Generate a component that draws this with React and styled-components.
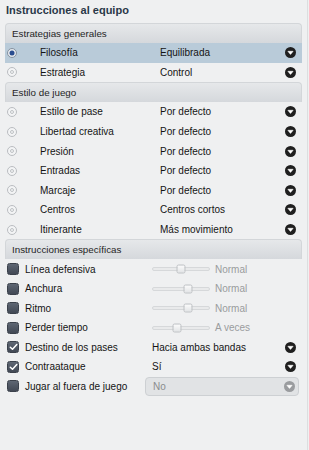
import styled, { createGlobalStyle } from "styled-components";

const GlobalStyle = createGlobalStyle`
  html, body {
    margin: 0;
    padding: 0;
    background: #eff0f1;
  }
  body {
    font-family: "Liberation Sans", Arial, sans-serif;
  }
`;

const Page = styled.div`
  width: 308px;
  height: 450px;
  box-sizing: border-box;
  border-right: 1px solid #dcdedf;
  padding: 0 7px 0 5px;
  background: #eff0f1;
`;

const Title = styled.h1`
  margin: 0 0 3px 1px;
  height: 20px;
  line-height: 20px;
  font-size: 11px;
  font-weight: 700;
  color: #2a3848;
`;

const Section = styled.div`
  width: 297px;
`;

const SectionHeader = styled.div`
  height: 20px;
  box-sizing: border-box;
  line-height: 19px;
  padding-left: 6px;
  font-size: 9.8px;
  color: #1f1f1f;
  border: 1px solid #d3d6d9;
  border-bottom: none;
  border-radius: 4px 4px 0 0;
  background: linear-gradient(#e6e8ea, #d5d8dc);
`;

const Row = styled.div`
  display: flex;
  align-items: center;
  height: ${p => p.$h || 19.6}px;
  font-size: 10px;
  color: #141414;
  background: ${p => (p.$active ? "#b9cbd9" : "transparent")};
`;

const Radio = styled.span`
  position: relative;
  flex: none;
  width: 10px;
  height: 10px;
  margin: 0 23px 0 2px;
  border-radius: 50%;
  box-sizing: border-box;
  border: 1px solid ${p => (p.$on ? "#8592a0" : "#babdc1")};
  background: ${p => (p.$on ? "#e4e8ec" : "#f3f4f5")};
  &::after {
    content: "";
    position: absolute;
    left: 50%;
    top: 50%;
    width: ${p => (p.$on ? 5 : 4)}px;
    height: ${p => (p.$on ? 5 : 4)}px;
    transform: translate(-50%, -50%);
    border-radius: 50%;
    box-sizing: border-box;
    background: ${p => (p.$on ? "#2a4d8f" : "transparent")};
    border: ${p => (p.$on ? "none" : "1px solid #bfc2c5")};
  }
`;

const Check = styled.span`
  display: flex;
  flex: none;
  align-items: center;
  justify-content: center;
  width: 12px;
  height: 12px;
  margin: 0 6px 0 2px;
  box-sizing: border-box;
  border-radius: 2.5px;
  border: 1px solid #3b414b;
  background: linear-gradient(#5e6673, #424955);
`;

const Label = styled.span`
  width: ${p => p.$w}px;
  flex: none;
  white-space: nowrap;
`;

const Value = styled.span`
  flex: 1;
  white-space: nowrap;
  color: ${p => (p.$muted ? "#8a8c8e" : "#141414")};
`;

const ArrowBox = styled.span`
  display: flex;
  width: 11px;
  height: 11px;
  margin-right: ${p => p.$mr ?? 6.5}px;
`;

const Slider = styled.span`
  display: flex;
  align-items: center;
  gap: 5px;
  color: #9a9c9e;
`;

const Track = styled.span`
  position: relative;
  width: 58px;
  height: 4px;
  box-sizing: border-box;
  border-radius: 2px;
  border: 1px solid #d6d8da;
  background: #e9eaeb;
`;

const Thumb = styled.span`
  position: absolute;
  top: 50%;
  width: 9px;
  height: 9px;
  box-sizing: border-box;
  transform: translate(-50%, -50%);
  border-radius: 2px;
  border: 1px solid #bfc2c5;
  background: linear-gradient(#fbfbfb, #e2e4e6);
`;

const Select = styled.span`
  display: flex;
  align-items: center;
  width: 154px;
  height: 19px;
  box-sizing: border-box;
  padding-left: 7px;
  margin-left: -7px;
  border: 1px solid #cdd0d3;
  border-radius: 4px;
  background: #e1e3e5;
`;

function Arrow({ color = "#1f1f1f", mr }) {
  return (
    <ArrowBox $mr={mr}>
      <svg width="11" height="11" viewBox="0 0 11 11">
        <circle cx="5.5" cy="5.5" r="5.5" fill={color} />
        <path d="M2.9 4.3 H8.1 L5.5 7.4 Z" fill="#fff" stroke="#fff" strokeWidth="0.6" strokeLinejoin="round" />
      </svg>
    </ArrowBox>
  );
}

function Tick() {
  return (
    <svg width="9" height="8" viewBox="0 0 9 8">
      <path d="M1.3 4.2 L3.5 6.3 L7.8 1.5" fill="none" stroke="#fff" strokeWidth="1.5" strokeLinecap="round" strokeLinejoin="round" />
    </svg>
  );
}

const general = [
  { label: "Filosofía", value: "Equilibrada", active: true },
  { label: "Estrategia", value: "Control" },
];

const style = [
  ["Estilo de pase", "Por defecto"],
  ["Libertad creativa", "Por defecto"],
  ["Presión", "Por defecto"],
  ["Entradas", "Por defecto"],
  ["Marcaje", "Por defecto"],
  ["Centros", "Centros cortos"],
  ["Itinerante", "Más movimiento"],
];

const sliders = [
  ["Línea defensiva", 28, "Normal"],
  ["Anchura", 35, "Normal"],
  ["Ritmo", 35, "Normal"],
  ["Perder tiempo", 24, "A veces"],
];

export default function App() {
  return (
    <>
      <GlobalStyle />
      <Page>
        <Title>Instrucciones al equipo</Title>

        <Section>
          <SectionHeader>Estrategias generales</SectionHeader>
          {general.map(r => (
            <Row key={r.label} $active={r.active}>
              <Radio $on={r.active} />
              <Label $w={120}>{r.label}</Label>
              <Value>{r.value}</Value>
              <Arrow />
            </Row>
          ))}
        </Section>

        <Section>
          <SectionHeader>Estilo de juego</SectionHeader>
          {style.map(([label, value]) => (
            <Row key={label}>
              <Radio />
              <Label $w={120}>{label}</Label>
              <Value>{value}</Value>
              <Arrow />
            </Row>
          ))}
        </Section>

        <Section>
          <SectionHeader>Instrucciones específicas</SectionHeader>
          {sliders.map(([label, pos, text]) => (
            <Row key={label} $h={19.5}>
              <Check />
              <Label $w={127}>{label}</Label>
              <Slider>
                <Track>
                  <Thumb style={{ left: `${pos}px` }} />
                </Track>
                {text}
              </Slider>
            </Row>
          ))}
          <Row $h={19.5}>
            <Check><Tick /></Check>
            <Label $w={127}>Destino de los pases</Label>
            <Value>Hacia ambas bandas</Value>
            <Arrow />
          </Row>
          <Row $h={19.5}>
            <Check><Tick /></Check>
            <Label $w={127}>Contraataque</Label>
            <Value>Sí</Value>
            <Arrow />
          </Row>
          <Row $h={19.5}>
            <Check />
            <Label $w={127}>Jugar al fuera de juego</Label>
            <Select>
              <Value $muted>No</Value>
              <Arrow color="#9a9c9f" mr={3} />
            </Select>
          </Row>
        </Section>
      </Page>
    </>
  );
}
